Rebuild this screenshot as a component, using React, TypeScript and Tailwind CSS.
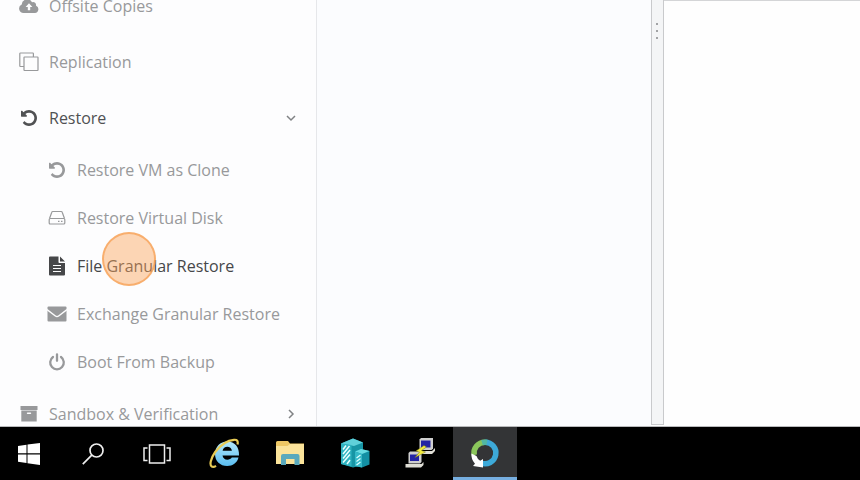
import type { ReactNode } from "react";

function UndoIcon() {
  return (
    <svg width="16" height="16" viewBox="0 128 1536 1536" fill="currentColor" aria-hidden="true">
      <path d="M1536 896q0 156-61 298t-164 245-245 164-298 61q-172 0-327-72.500t-264-204.500q-7-10-6.500-22.500t8.500-20.500l137-138q10-9 25-9 16 2 23 12 73 95 179 147t225 52q104 0 198.500-40.500t163.500-109.500 109.500-163.500 40.500-198.500-40.500-198.500-109.500-163.500-163.500-109.500-198.500-40.500q-98 0-188 35.500t-160 101.500l137 138q31 30 14 69-17 40-59 40h-448q-26 0-45-19t-19-45v-448q0-42 40-59 39-17 69 14l130 129q107-101 244.500-156.500t284.500-55.500q156 0 298 61t245 164 164 245 61 298z" />
    </svg>
  );
}

function CloudUploadIcon() {
  return (
    <svg width="20" height="16" viewBox="0 0 20 16" aria-hidden="true">
      <path fill="currentColor" d="M4.500 15A4.400 4.400 0 0 1 2.700 6.600 5.500 5.500 0 0 1 13 4.200a3 3 0 0 1 4 3.500A3.800 3.800 0 0 1 16 15Z" />
      <path fill="#fdfdfe" d="M10 5.200 13.400 9H11.200v3.200H8.800V9H6.600Z" />
    </svg>
  );
}

function CopyIcon() {
  return (
    <svg width="20" height="20" viewBox="0 0 20 20" fill="none" stroke="currentColor" strokeWidth="1.200" strokeLinejoin="round" aria-hidden="true">
      <path d="M5 14.500H1.500a.7.7 0 0 1-.7-.7V1.700a.7.7 0 0 1 .7-.7h12.200a.7.7 0 0 1 .7.7V5" />
      <rect x="5" y="5" width="14" height="13.500" rx=".5" />
    </svg>
  );
}

function DiskIcon() {
  return (
    <svg width="18" height="16" viewBox="0 0 18 16" fill="none" stroke="currentColor" strokeWidth="1.200" strokeLinejoin="round" aria-hidden="true">
      <path d="M1.500 8.500 3.800 2.200Q4 1.500 4.800 1.500h8.400q.8 0 1 .7l2.300 6.300" />
      <rect x="1.200" y="8.500" width="15.600" height="5.500" rx="1" />
      <path d="M10 11.300h1.500M13 11.300h1.500" />
    </svg>
  );
}

function FileIcon() {
  return (
    <svg width="18" height="20" viewBox="0 0 18 20" aria-hidden="true">
      <path fill="currentColor" d="M2 .5h8.500v5.700q0 .8.800.8H17v11.500q0 1-1 1H2q-1 0-1-1v-17q0-1 1-1ZM12 .5 17 5.500H12Z" />
      <path stroke="#fdfdfe" strokeWidth="1.200" d="M5 9.500h8M5 12.500h8M5 15.500h8" />
    </svg>
  );
}

function EnvelopeIcon() {
  return (
    <svg width="20" height="16" viewBox="0 0 20 16" aria-hidden="true">
      <rect x=".5" y=".5" width="19" height="15" rx="1" fill="currentColor" />
      <path d="M0 3.500 8.400 10q1.600 1.200 3.200 0L20 3.500" fill="none" stroke="#fdfdfe" strokeWidth="1.400" />
    </svg>
  );
}

function PowerIcon() {
  return (
    <svg width="18" height="18" viewBox="0 0 18 18" fill="none" stroke="currentColor" strokeWidth="2.300" strokeLinecap="round" aria-hidden="true">
      <path d="M5 4A6.800 6.800 0 1 0 13 4M9 1.300v6.500" />
    </svg>
  );
}

function ArchiveIcon() {
  return (
    <svg width="18" height="16" viewBox="0 0 18 16" aria-hidden="true">
      <path fill="currentColor" d="M.5 0h17v4H.5ZM1.300 4.500h15.400v11H1.300Z" />
      <path stroke="#fdfdfe" strokeWidth="1.400" strokeLinecap="round" d="M7.500 7.300h3" />
    </svg>
  );
}

function Chevron({ open }: { open: boolean }) {
  return (
    <svg width="10" height="10" viewBox="0 0 10 10" fill="none" stroke="#808284" strokeWidth="1.500" aria-hidden="true">
      <path d={open ? "M1 3l4 4 4-4" : "M3 1l4 4-4 4"} />
    </svg>
  );
}

type ItemProps = {
  icon: ReactNode;
  label: string;
  active?: boolean;
  expanded?: boolean;
};

function NavItem({ icon, label, active, expanded }: ItemProps) {
  return (
    <button
      type="button"
      aria-expanded={expanded}
      className={`flex h-14 w-full items-center pr-5 pl-[19px] text-left ${active ? "text-[#505153]" : "text-[#98999b]"}`}
    >
      <span className="flex w-5 justify-center">{icon}</span>
      <span className="ml-[10px] flex-1">{label}</span>
      {expanded !== undefined && <Chevron open={expanded} />}
    </button>
  );
}

function SubItem({ icon, label, active }: ItemProps) {
  return (
    <li>
      <a href="#" className={`flex h-12 items-center pl-[47px] ${active ? "text-[#464749]" : "text-[#98999b]"}`}>
        <span className="flex w-5 justify-center">{icon}</span>
        <span className="ml-[10px]">{label}</span>
      </a>
    </li>
  );
}

function Sidebar() {
  return (
    <nav className="relative w-[317px] shrink-0 overflow-hidden border-r border-[#e6e7ea] bg-[#fdfdfe]">
      <div className="-mt-[22px]">
        <NavItem icon={<CloudUploadIcon />} label="Offsite Copies" />
        <NavItem icon={<CopyIcon />} label="Replication" />
        <NavItem icon={<UndoIcon />} label="Restore" active expanded />
        <ul>
          <SubItem icon={<UndoIcon />} label="Restore VM as Clone" />
          <SubItem icon={<DiskIcon />} label="Restore Virtual Disk" />
          <SubItem icon={<FileIcon />} label="File Granular Restore" active />
          <SubItem icon={<EnvelopeIcon />} label="Exchange Granular Restore" />
          <SubItem icon={<PowerIcon />} label="Boot From Backup" />
        </ul>
        <NavItem icon={<ArchiveIcon />} label="Sandbox & Verification" expanded={false} />
      </div>
      <span className="pointer-events-none absolute top-[232px] left-[102px] size-[54px] rounded-full border-2 border-[#f79c4f]/70 bg-[#fba55c]/45" />
    </nav>
  );
}

function WindowsLogo() {
  return (
    <svg width="22" height="22" viewBox="0 0 22 22" fill="#fff" aria-hidden="true">
      <path d="M0 3 8.500 1.800V10.300H0ZM9.500 1.600 22 0v10.300H9.500ZM0 11.500h8.500V20L0 18.800ZM9.500 11.500H22V22L9.500 20.200Z" />
    </svg>
  );
}

function SearchIcon() {
  return (
    <svg width="22" height="22" viewBox="0 0 22 22" fill="none" stroke="#eee" strokeWidth="1.700" aria-hidden="true">
      <circle cx="14.500" cy="7.500" r="6.500" />
      <path d="M9.800 12.200.8 21.200" />
    </svg>
  );
}

function TaskViewIcon() {
  return (
    <svg width="28" height="20" viewBox="0 0 28 20" fill="none" stroke="#eee" strokeWidth="1.500" aria-hidden="true">
      <rect x="6.500" y="1" width="15" height="18" />
      <path d="M4.500 4H1v12.500h3.500M23.500 4H27v12.500h-3.500" />
    </svg>
  );
}

function ExplorerIcon() {
  return (
    <svg width="32" height="32" viewBox="0 0 32 32" fill="none" aria-hidden="true">
      <defs>
        <linearGradient id="ie-blue" x1="0" y1="0" x2="0" y2="1">
          <stop offset="0" stopColor="#b4e8fb" />
          <stop offset="1" stopColor="#5abdf0" />
        </linearGradient>
      </defs>
      <path d="M30 18.500H13.500c.4 2.700 2.300 4.200 4.900 4.200 2 0 3.500-.8 4.400-2.200h6.700C28 26 23.800 29 18.200 29 11.200 29 6 24.200 6 17S11.200 4.500 18.300 4.500c7.300 0 12.200 5.500 11.700 14ZM13.600 13.800h9.300c-.4-2.500-2.200-4-4.600-4s-4.200 1.500-4.700 4Z" fill="url(#ie-blue)" />
      <path d="M28.500 7.500c.8-3.500-.4-5-3.500-4.700C19 3.300 11.500 8 6.200 15 1.500 21.700.3 28 2.800 29.600c1.200.6 2.700.2 4.200-.8" stroke="#e8cb55" strokeWidth="2.200" />
    </svg>
  );
}

function FolderIcon() {
  return (
    <svg width="30" height="26" viewBox="0 0 30 26" aria-hidden="true">
      <path d="M1 24V2.500Q1 1 2.500 1H13l2 2.500h14V24Z" fill="#eec765" />
      <path d="M1 6h11.500L15 4h14v20H1Z" fill="#fbe39a" />
      <path d="M6 25V16q0-2 2-2h14.500q2 0 2 2v9h-5v-6h-8.500v6Z" fill="#5aa9bd" />
    </svg>
  );
}

function ServersIcon() {
  return (
    <svg width="32" height="32" viewBox="0 0 32 32" aria-hidden="true">
      <path d="M2 6.500 14 1.500 24 5.500V28l-10 2.500L2 27Z" fill="#1795a5" />
      <path d="M2 6.500 14 1.500l10 4-9 3.500Z" fill="#5fd0da" />
      <path d="M2 6.500 12.500 8v21.500L2 27Z" fill="#2fb3c1" />
      <path d="M4 12.500l3-4M4 17l6.500-8M4 21.500 11 13M4 25.500l7-8M8 27l3-4" stroke="#e8ffff" strokeWidth="1.500" />
      <path d="M16 14.500 22 12l8.500 2v13.500L23 30.500l-7-1.500Z" fill="#1390a4" />
      <path d="M16 14.500 22 12l8.500 2-7.500 3Z" fill="#68dce3" />
      <path d="M16 14.500l7 2.500v13.500L16 29Z" fill="#35b9c8" />
      <path d="M17.500 21l4-3M17.500 24.500l4-3M17.500 28l4-3" stroke="#dcffff" strokeWidth="1.200" />
    </svg>
  );
}

function TerminalIcon() {
  return (
    <svg width="32" height="32" viewBox="0 0 32 32" aria-hidden="true">
      <path d="M15.500 2.500 17 1h12v10.500L27.500 13h-12Z" fill="#cfcfcf" />
      <path d="M17 3.500h9.500v7H17Z" fill="#2424a4" />
      <path d="M14 14h14l3-3v3l-3 3H14Z" fill="#deddd5" />
      <path d="M4.500 16 6 14.500h11.500V25L16 26.500H4.500Z" fill="#cfcfcf" />
      <path d="M6 17.500h9v6.500H6Z" fill="#2424a4" />
      <path d="M1.500 27h16l2-2v3l-2.500 2.500H1.500Z" fill="#deddd5" />
      <path d="M20 8.500l-8 5.500 3.500 1L11 20.500l10.500-5.500-4-1.500 5-3.500Z" fill="#f4ed3d" stroke="#77751b" strokeWidth=".5" />
    </svg>
  );
}

function BackupAppIcon() {
  return (
    <svg width="30" height="30" viewBox="0 0 30 30" fill="none" aria-hidden="true">
      <path d="M15 4.200A10.800 10.800 0 1 1 11 25" stroke="#3da9d8" strokeWidth="5.500" />
      <path d="M4.200 17A10.800 10.800 0 0 1 15 4.200" stroke="#8bc65b" strokeWidth="5.500" />
      <path d="M12 4.600A10.800 10.800 0 0 1 17 4.300" stroke="#52b7a3" strokeWidth="5.500" />
      <path d="M1.400 15.500 6.500 18q.8 3 3.700 4.800L13 21v8.500L3 28l2-2.300Q1 21.500 1.400 15.500Z" fill="#fff" />
    </svg>
  );
}

const systemButtons = [
  { label: "Search", icon: <SearchIcon /> },
  { label: "Task View", icon: <TaskViewIcon /> },
];

const apps = [
  { label: "Internet Explorer", icon: <ExplorerIcon /> },
  { label: "File Explorer", icon: <FolderIcon /> },
  { label: "Server Manager", icon: <ServersIcon /> },
  { label: "PuTTY", icon: <TerminalIcon /> },
  { label: "Backup", icon: <BackupAppIcon />, current: true },
];

function Taskbar() {
  return (
    <footer className="flex h-[53px] shrink-0 bg-black">
      <button type="button" aria-label="Start" className="flex w-[58px] items-center justify-center">
        <WindowsLogo />
      </button>
      <div className="ml-[3px] flex">
        {systemButtons.map((b) => (
          <button key={b.label} type="button" aria-label={b.label} className="flex w-16 items-center justify-center">
            {b.icon}
          </button>
        ))}
      </div>
      <div className="ml-1 flex gap-px">
        {apps.map((a) => (
          <button
            key={a.label}
            type="button"
            aria-label={a.label}
            className={`flex w-16 items-center justify-center border-b-3 pt-px ${a.current ? "border-[#76aee0] bg-[#333436]" : "border-transparent"}`}
          >
            {a.icon}
          </button>
        ))}
      </div>
    </footer>
  );
}

export default function App() {
  return (
    <div className="flex h-screen flex-col overflow-hidden bg-white font-['Open_Sans','Noto_Sans',sans-serif] text-base">
      <main className="flex min-h-0 flex-1 border-b border-[#b9babc]">
        <Sidebar />
        <section className="flex-1 bg-[#fbfcfe]" />
        <div
          role="separator"
          aria-orientation="vertical"
          className="mb-px flex w-[13px] shrink-0 flex-col items-start gap-[5px] border-x border-b border-[#c9cacc] bg-[#f4f5f6] pt-[23px] pl-1"
        >
          <span className="size-[2px] bg-[#a2a3a5]" />
          <span className="size-[2px] bg-[#a2a3a5]" />
          <span className="size-[2px] bg-[#a2a3a5]" />
        </div>
        <section className="w-[196px] shrink-0 border-t border-[#d4d5d7] bg-[#fefefe]" />
      </main>
      <Taskbar />
    </div>
  );
}
